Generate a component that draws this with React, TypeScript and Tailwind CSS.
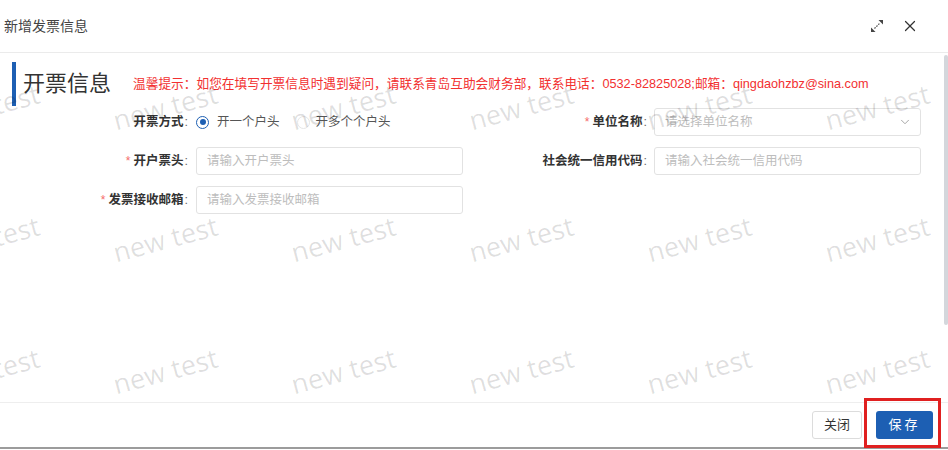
import { ChevronDown, X } from "lucide-react";

const watermarks = Array.from({ length: 24 });

function Label({ text, required, className = "" }: { text: string; required?: boolean; className?: string }) {
  return (
    <div className={`flex items-center justify-end text-[12.5px] font-bold text-[#333] ${className}`}>
      {required && <span className="mr-[3px] text-[12px] font-normal text-[#f56c6c]">*</span>}
      <span>{text}</span>
      <span className="ml-[1px] font-normal text-[#666]">:</span>
    </div>
  );
}

function TextInput({ placeholder, select }: { placeholder: string; select?: boolean }) {
  return (
    <div className="flex h-7 w-[267px] items-center justify-between rounded-[3px] border border-[#e2e2e2] bg-white pl-[10px] pr-[8px]">
      <span className="text-[12.5px] text-[#bdbdbd]">{placeholder}</span>
      {select && <ChevronDown className="h-[14px] w-[14px] text-[#999]" strokeWidth={1.5} />}
    </div>
  );
}

function ExpandIcon() {
  return (
    <svg width="14" height="14" viewBox="0 0 14 14" className="text-[#444]">
      <path d="M1 13 L1 8.5 L5.5 13 Z" fill="currentColor" />
      <path d="M13 1 L13 5.5 L8.5 1 Z" fill="currentColor" />
      <path d="M4.5 9.5 L9.5 4.5" stroke="currentColor" strokeWidth="1.2" strokeDasharray="1.5 1.2" />
    </svg>
  );
}

export default function App() {
  return (
    <div className="relative flex h-[450px] w-[948px] flex-col overflow-hidden bg-white font-['Liberation_Sans','Noto_Sans_CJK_SC',sans-serif]">
      {/* header */}
      <div className="flex h-[53px] shrink-0 items-center justify-between border-b border-[#ebebeb] pl-1 pr-[29px]">
        <span className="text-[14px] text-[#444]">新增发票信息</span>
        <div className="flex items-center gap-[17px]">
          <ExpandIcon />
          <X className="h-[18px] w-[18px] text-[#333]" strokeWidth={1.6} />
        </div>
      </div>

      {/* body */}
      <div className="flex h-[349px] shrink-0">
        <div className="flex-1 pt-[9px]">
          <div className="flex h-[44px] items-center">
            <div className="ml-3 h-[44px] w-1 bg-[#1d5fb3]" />
            <span className="ml-[7px] text-[22px] leading-none text-[#333]">开票信息</span>
            <span className="ml-[22px] mt-[1px] whitespace-nowrap text-[12.7px] text-[#f23030]">
              温馨提示：如您在填写开票信息时遇到疑问，请联系青岛互助会财务部，联系电话：0532-82825028;邮箱：qingdaohzbz@sina.com
            </span>
          </div>

          <div className="mt-[2px] grid grid-cols-[463px_1fr] gap-y-[11px]">
            <div className="flex items-center">
              <Label text="开票方式" className="w-[196px] pr-2" />
              <div className="flex items-center text-[12.5px] text-[#555]">
                <span className="flex h-[13px] w-[13px] items-center justify-center rounded-full border border-[#1d5fb3]">
                  <span className="h-[6px] w-[6px] rounded-full bg-[#1d5fb3]" />
                </span>
                <span className="ml-2">开一个户头</span>
                <span className="ml-[17px] h-[13px] w-[13px] rounded-full border border-[#e6e6e6]" />
                <span className="ml-[6px]">开多个个户头</span>
              </div>
            </div>
            <div className="flex items-center">
              <Label text="单位名称" required className="w-[191px] pr-[7px]" />
              <TextInput placeholder="请选择单位名称" select />
            </div>

            <div className="flex items-center">
              <Label text="开户票头" required className="w-[196px] pr-2" />
              <TextInput placeholder="请输入开户票头" />
            </div>
            <div className="flex items-center">
              <Label text="社会统一信用代码" className="w-[191px] pr-[7px]" />
              <TextInput placeholder="请输入社会统一信用代码" />
            </div>

            <div className="flex items-center">
              <Label text="发票接收邮箱" required className="w-[196px] pr-2" />
              <TextInput placeholder="请输入发票接收邮箱" />
            </div>
          </div>
        </div>
        {/* scrollbar */}
        <div className="w-1 pt-[2px]">
          <div className="h-[270px] w-1 rounded-sm bg-[#d4d7dc]" />
        </div>
      </div>

      {/* footer */}
      <div className="flex h-[45px] shrink-0 items-center justify-end border-t border-[#eeeeee] pr-[15px]">
        <button className="h-7 w-[50px] rounded-[3px] border border-[#dcdcdc] bg-white text-[13px] text-[#333]">
          关闭
        </button>
        <div className="relative ml-[14px]">
          <button className="h-7 w-[57px] rounded-[3px] bg-[#1d5fb3] text-[13px] tracking-[3px] text-white">
            保存
          </button>
          <span className="pointer-events-none absolute -bottom-[9px] -left-[12px] -right-[8px] -top-[13px] border-[3px] border-[#e02020]" />
        </div>
      </div>
      <div className="h-[2px] shrink-0 bg-[#9c9c9c]" />

      {/* watermark */}
      <div className="pointer-events-none absolute inset-0 overflow-hidden">
        <div className="absolute left-[-102px] top-[-91px] grid grid-cols-[repeat(6,178px)] grid-rows-[repeat(4,132px)]">
          {watermarks.map((_, i) => (
            <div key={i} className="flex items-center justify-center">
              <span className="-rotate-[15deg] whitespace-nowrap font-['Open_Sans',sans-serif] text-[27px] text-black/[0.13]">
                new test
              </span>
            </div>
          ))}
        </div>
      </div>
    </div>
  );
}
